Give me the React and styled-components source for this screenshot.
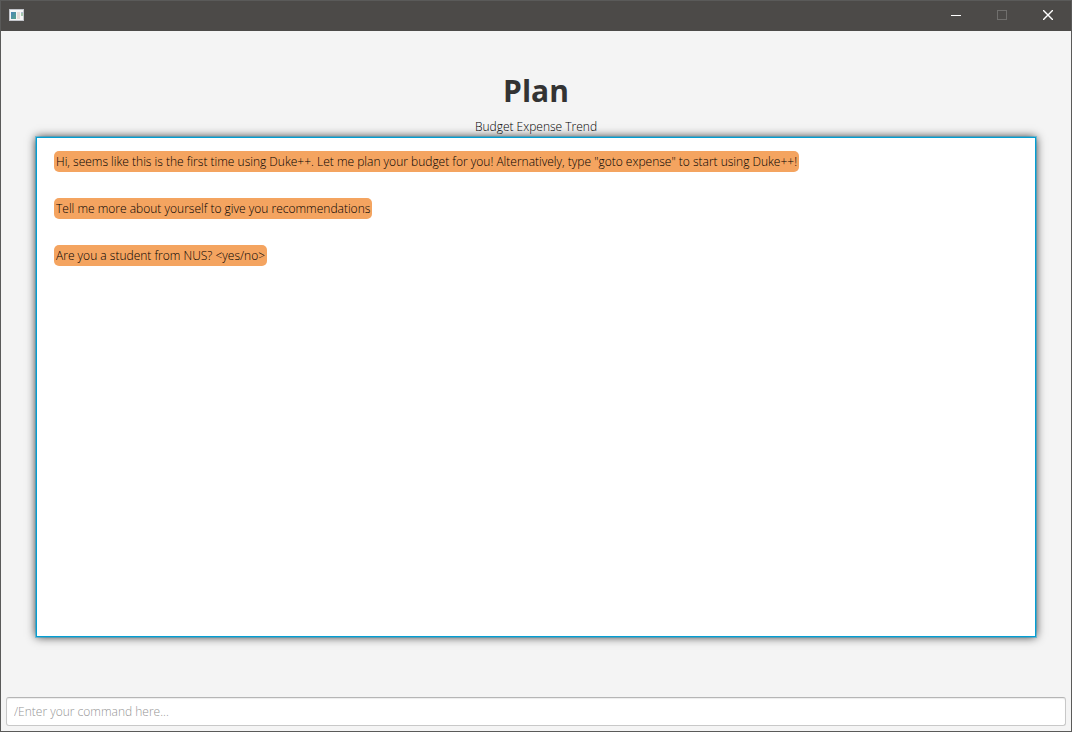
import React from "react";
import styled, { createGlobalStyle } from "styled-components";

const GlobalStyle = createGlobalStyle`
  *, *::before, *::after { box-sizing: border-box; }
  html, body, #root { height: 100%; }
  body {
    margin: 0;
    background: #f4f4f4;
    color: #000000;
    font: 300 12px/16px "Segoe UI", "Open Sans", "Noto Sans", sans-serif;
  }
`;

const Window = styled.div`
  display: flex;
  flex-direction: column;
  min-height: 100%;
  border: 1px solid #5a5a59;
`;

const TitleBar = styled.header`
  display: flex;
  align-items: center;
  justify-content: space-between;
  height: 30px;
  padding: 0 0 2px 8px;
  background: #4c4a48;
`;

const AppIcon = styled.svg`
  display: block;
  width: 15px;
  height: 12px;
`;

const WindowControls = styled.div`
  display: flex;
  align-self: stretch;
`;

const ControlButton = styled.button`
  display: grid;
  place-items: center;
  width: 46px;
  padding: 0;
  border: 0;
  background: transparent;
  color: #ffffff;

  &:disabled {
    color: #706f6d;
  }

  svg {
    display: block;
  }
`;

const Main = styled.main`
  display: flex;
  flex: 1;
  flex-direction: column;
  padding: 38px 35px 60px;
`;

const Title = styled.h1`
  margin: 0;
  color: #333333;
  font-size: 30px;
  line-height: 44px;
  font-weight: 700;
  text-align: center;
`;

const Subtitle = styled.p`
  margin: 6px 0 0;
  padding-bottom: 2px;
  text-align: center;
`;

const Conversation = styled.section`
  position: relative;
  display: flex;
  flex: 1;
  flex-direction: column;
  align-items: flex-start;
  gap: 26px;
  padding: 13px 17px;
  border: 1px solid #039ed3;
  background: #ffffff;
  box-shadow: 0 0 0 1px rgba(3, 158, 211, 0.4), 0 0 9px rgba(0, 0, 0, 0.8);
`;

const Message = styled.p`
  margin: 0;
  padding: 3px 2px 2px;
  border-radius: 5px;
  background: #f4a460;
`;

const CommandForm = styled.form`
  display: flex;
  padding: 0 5px 5px;
`;

const CommandInput = styled.input`
  flex: 1;
  min-width: 0;
  height: 29px;
  padding: 0 7px;
  border: 1px solid #c8c8c8;
  border-top-color: #b5b5b5;
  border-radius: 3px;
  outline: 0;
  background: #ffffff;
  box-shadow: inset 0 1px 1px #ededed;
  color: #000000;
  font: inherit;

  &::placeholder {
    color: #959595;
    opacity: 1;
  }
`;

const messages = [
  'Hi, seems like this is the first time using Duke++. Let me plan your budget for you! Alternatively, type "goto expense" to start using Duke++!',
  "Tell me more about yourself to give you recommendations",
  "Are you a student from NUS? <yes/no>",
];

function WindowIcon() {
  return (
    <AppIcon viewBox="0 0 15 12" aria-hidden="true">
      <defs>
        <linearGradient id="pane" x1="0" y1="0" x2="1" y2="1">
          <stop offset="0" stopColor="#4a86b8" />
          <stop offset="1" stopColor="#5aa389" />
        </linearGradient>
      </defs>
      <rect width="15" height="12" fill="#c3c5ca" />
      <rect x="1" y="1" width="13" height="10" fill="#f6f6f6" />
      <rect x="2" y="3" width="5" height="7" fill="url(#pane)" />
      <rect x="8" y="3" width="3" height="7" fill="#e6ddd8" />
      <rect x="12" y="3" width="2" height="1" fill="#b3bdd6" />
      <rect x="12" y="4" width="2" height="3" fill="#a4c9ae" />
    </AppIcon>
  );
}

export default function App() {
  return (
    <>
      <GlobalStyle />
      <Window>
        <TitleBar>
          <WindowIcon />
          <WindowControls>
            <ControlButton type="button" aria-label="Minimize">
              <svg width="10" height="10" viewBox="0 0 10 10">
                <path d="M0 5.5H10" stroke="currentColor" />
              </svg>
            </ControlButton>
            <ControlButton type="button" aria-label="Maximize" disabled>
              <svg width="10" height="10" viewBox="0 0 10 10">
                <rect x=".5" y=".5" width="9" height="9" fill="none" stroke="currentColor" />
              </svg>
            </ControlButton>
            <ControlButton type="button" aria-label="Close">
              <svg width="10" height="10" viewBox="0 0 10 10">
                <path d="M0 0L10 10M10 0L0 10" stroke="currentColor" strokeWidth="1.4" />
              </svg>
            </ControlButton>
          </WindowControls>
        </TitleBar>
        <Main>
          <Title>Plan</Title>
          <Subtitle>Budget Expense Trend</Subtitle>
          <Conversation aria-label="Conversation">
            {messages.map((text) => (
              <Message key={text}>{text}</Message>
            ))}
          </Conversation>
        </Main>
        <CommandForm onSubmit={(event) => event.preventDefault()}>
          <CommandInput type="text" aria-label="Command" placeholder="/Enter your command here..." />
        </CommandForm>
      </Window>
    </>
  );
}
